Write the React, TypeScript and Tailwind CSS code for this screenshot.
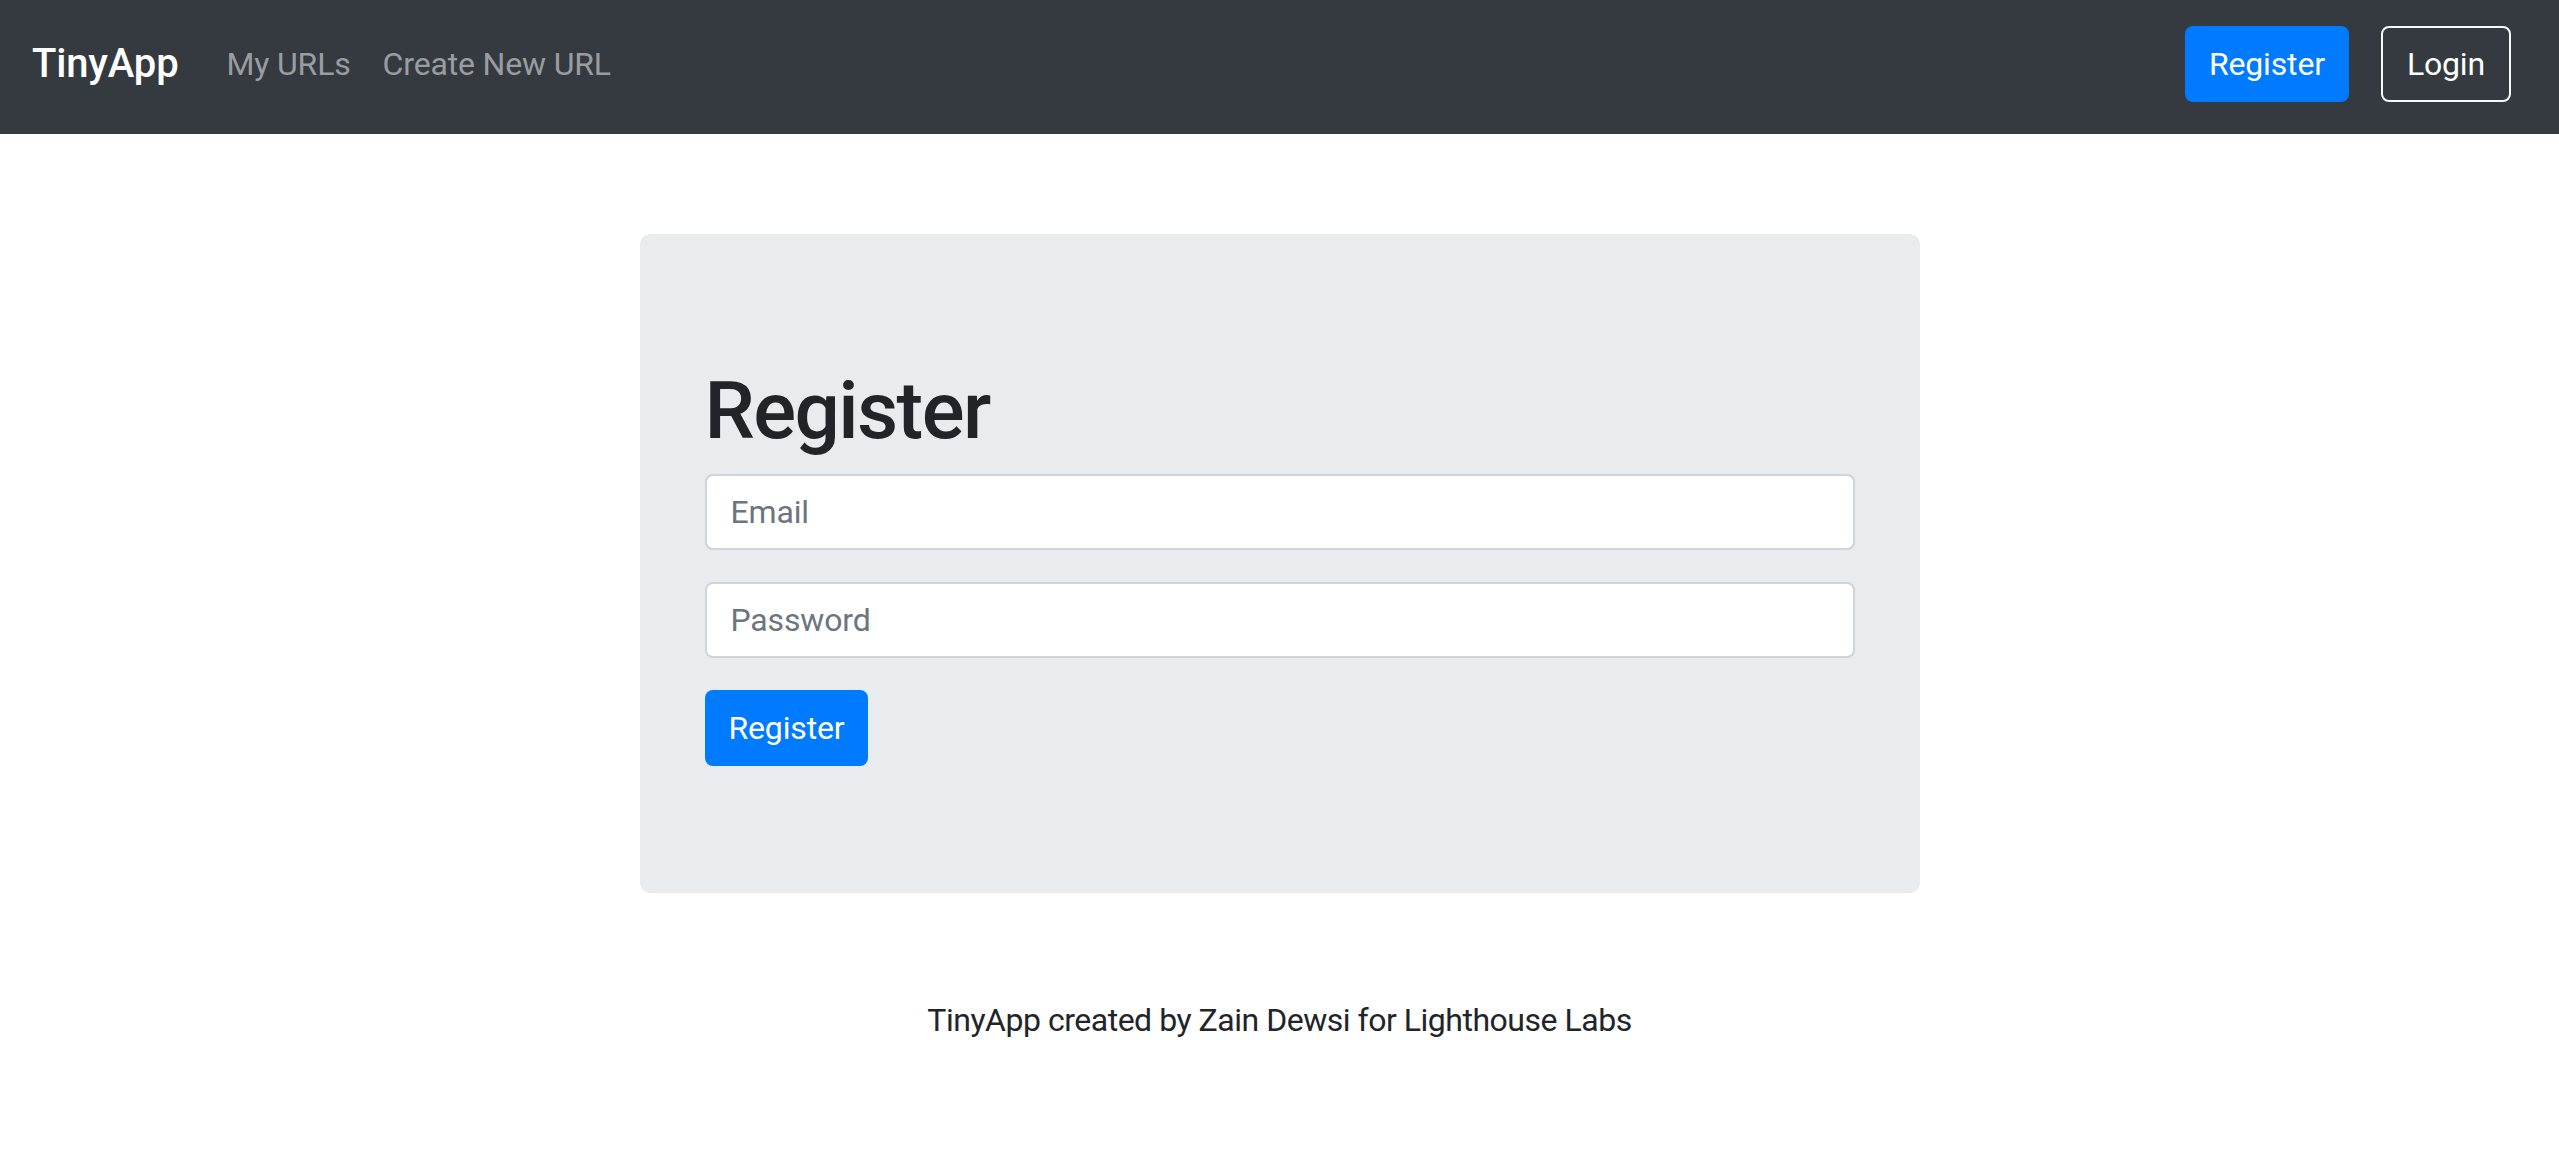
import { useState } from 'react';

export default function App() {
  const [email, setEmail] = useState('');
  const [password, setPassword] = useState('');

  return (
    <div className="min-h-screen bg-white font-['Roboto','Liberation_Sans',sans-serif] tracking-[-0.01em] text-[#212529]">
      <nav className="flex items-center bg-[#343a40] px-[32px] pt-[26px] pb-[32px]">
        <a href="#" className="mr-[32px] text-[40px] leading-[60px] font-medium text-white">
          TinyApp
        </a>
        <div className="flex items-center">
          <a href="#" className="px-[16px] text-[32px] leading-[48px] text-[#9a9da0]">
            My URLs
          </a>
          <a href="#" className="px-[16px] text-[32px] leading-[48px] text-[#9a9da0]">
            Create New URL
          </a>
        </div>
        <div className="ml-auto mr-[16px] flex items-center gap-[32px]">
          <button className="h-[76px] rounded-[8px] bg-[#007bff] px-[24px] text-[32px] text-white">
            Register
          </button>
          <button className="h-[76px] rounded-[8px] border-2 border-[#f8f9fa] px-[24px] text-[32px] text-white">
            Login
          </button>
        </div>
      </nav>

      <main className="mx-auto mt-[100px] w-[1280px] rounded-[10px] bg-[#e9ecef] px-[65px] pt-[129px] pb-[127px]">
        <h1 className="mb-[15px] text-[80px] leading-[96px] font-medium tracking-[-0.02em]">Register</h1>
        <form onSubmit={(e) => e.preventDefault()}>
          <input
            type="email"
            value={email}
            onChange={(e) => setEmail(e.target.value)}
            placeholder="Email"
            className="mb-[32px] block h-[76px] w-full rounded-[8px] border-2 border-[#ced4da] bg-white px-[24px] text-[32px] placeholder:text-[#6c757d] outline-none"
          />
          <input
            type="password"
            value={password}
            onChange={(e) => setPassword(e.target.value)}
            placeholder="Password"
            className="mb-[32px] block h-[76px] w-full rounded-[8px] border-2 border-[#ced4da] bg-white px-[24px] text-[32px] placeholder:text-[#6c757d] outline-none"
          />
          <button type="submit" className="h-[76px] rounded-[8px] bg-[#007bff] px-[24px] text-[32px] text-white">
            Register
          </button>
        </form>
      </main>

      <footer className="mt-[103px] text-center text-[32px] leading-[48px] tracking-[-0.015em]">
        TinyApp created by Zain Dewsi for Lighthouse Labs
      </footer>
    </div>
  );
}
